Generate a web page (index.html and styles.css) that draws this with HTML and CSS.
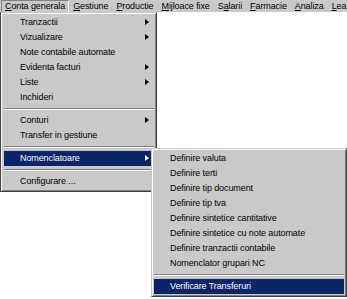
FILE: index.html
```html
<!DOCTYPE html>
<html>
<head>
<meta charset="utf-8">
<link rel="stylesheet" href="styles.css">
</head>
<body>
<div class="menubar">
  <span class="title active"><u>C</u>onta generala</span>
  <span class="title"><u>G</u>estiune</span>
  <span class="title"><u>P</u>roductie</span>
  <span class="title"><u>M</u>ijloace fixe</span>
  <span class="title">S<u>a</u>larii</span>
  <span class="title"><u>F</u>armacie</span>
  <span class="title"><u>A</u>naliza</span>
  <span class="title"><u>L</u>ea</span>
</div>

<div class="menu menu-main">
  <div class="item sub">Tranzactii</div>
  <div class="item sub">Vizualizare</div>
  <div class="item">Note contabile automate</div>
  <div class="item sub">Evidenta facturi</div>
  <div class="item sub">Liste</div>
  <div class="item">Inchideri</div>
  <div class="sep"></div>
  <div class="item sub">Conturi</div>
  <div class="item">Transfer in gestiune</div>
  <div class="sep"></div>
  <div class="item sub selected">Nomenclatoare</div>
  <div class="sep"></div>
  <div class="item">Configurare ...</div>
</div>

<div class="menu menu-sub">
  <div class="item">Definire valuta</div>
  <div class="item">Definire terti</div>
  <div class="item">Definire tip document</div>
  <div class="item">Definire tip tva</div>
  <div class="item">Definire sintetice cantitative</div>
  <div class="item">Definire sintetice cu note automate</div>
  <div class="item">Definire tranzactii contabile</div>
  <div class="item">Nomenclator grupari NC</div>
  <div class="sep"></div>
  <div class="item selected">Verificare Transferuri</div>
</div>
</body>
</html>
```

FILE: styles.css
```css
* { box-sizing: border-box; }
html, body {
  margin: 0;
  padding: 0;
  background: #ffffff;
  width: 347px;
  height: 299px;
  overflow: hidden;
  font-family: "Liberation Sans", Arial, sans-serif;
  font-size: 9px;
  letter-spacing: -0.1px;
  color: #000;
}
body { position: relative; }

.menubar {
  height: 12px;
  background: #c9c9c9;
  display: flex;
  padding-left: 1px;
  white-space: nowrap;
  overflow: hidden;
}
.title {
  padding: 1px 3px 0 3px;
  flex: none;
  border: 1px solid transparent;
  border-top: 0;
  border-bottom: 0;
  line-height: 11px;
}
.title u { text-decoration: underline; text-underline-offset: 1px; }
.title.active {
  border-left: 1px solid #808080;
  border-top: 1px solid #808080;
  border-right: 1px solid #ffffff;
  padding-top: 0;
}

.menu {
  position: absolute;
  background: #c9c9c9;
  border: 1px solid;
  border-color: #c9c9c9 #404040 #404040 #c9c9c9;
  box-shadow: inset 1px 1px #ffffff, inset -1px -1px #808080;
  padding: 2px;
}
.menu-main {
  left: 0;
  top: 12px;
  width: 157px;
  padding-left: 3px;
  border-left-color: #404040;
}
.menu-sub {
  left: 151px;
  top: 148px;
  width: 196px;
}

.item {
  position: relative;
  height: 15px;
  line-height: 15px;
  padding-left: 16px;
  white-space: nowrap;
}
.item.selected {
  background: #0a246a;
  color: #ffffff;
}
.item.sub::after {
  content: "";
  position: absolute;
  right: 5px;
  top: 4px;
  width: 0;
  height: 0;
  border-left: 4px solid #000;
  border-top: 3.5px solid transparent;
  border-bottom: 3.5px solid transparent;
}
.item.sub.selected::after { border-left-color: #ffffff; }

.sep {
  height: 8px;
  padding-top: 3px;
}
.sep::before {
  content: "";
  display: block;
  height: 1px;
  background: #808080;
  border-bottom: 1px solid #ffffff;
  box-sizing: content-box;
}
```
